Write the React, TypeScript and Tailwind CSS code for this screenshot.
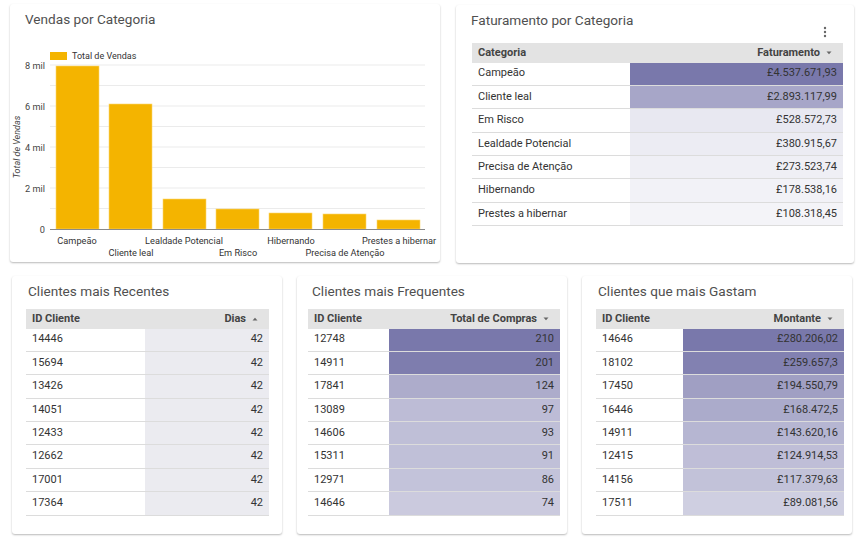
import React from 'react';

type Row = { k: string; v: string; bg: string };

// heat map colour, from the light end (t=0) to the dark purple (t=1)
function shade(t: number) {
  const r = Math.round(247 - 126 * t);
  const g = Math.round(247 - 127 * t);
  const b = Math.round(250 - 79 * t);
  return `rgb(${r}, ${g}, ${b})`;
}

function heat(data: [string, number, string][]): Row[] {
  const max = Math.max(...data.map((d) => d[1]));
  return data.map(([k, n, v]) => ({ k, v, bg: shade(n / max) }));
}

const faturamento = heat([
  ['Campeão', 4537671.93, '£4.537.671,93'],
  ['Cliente leal', 2893117.99, '£2.893.117,99'],
  ['Em Risco', 528572.73, '£528.572,73'],
  ['Lealdade Potencial', 380915.67, '£380.915,67'],
  ['Precisa de Atenção', 273523.74, '£273.523,74'],
  ['Hibernando', 178538.16, '£178.538,16'],
  ['Prestes a hibernar', 108318.45, '£108.318,45'],
]);

const recentes: Row[] = ['14446', '15694', '13426', '14051', '12433', '12662', '17001', '17364'].map(
  (k) => ({ k, v: '42', bg: '#ebebf0' }),
);

const frequentes = heat(
  [
    ['12748', 210],
    ['14911', 201],
    ['17841', 124],
    ['13089', 97],
    ['14606', 93],
    ['15311', 91],
    ['12971', 86],
    ['14646', 74],
  ].map(([k, n]) => [k as string, n as number, String(n)]),
);

const gastam = heat([
  ['14646', 280206.02, '£280.206,02'],
  ['18102', 259657.3, '£259.657,3'],
  ['17450', 194550.79, '£194.550,79'],
  ['16446', 168472.5, '£168.472,5'],
  ['14911', 143620.16, '£143.620,16'],
  ['12415', 124914.53, '£124.914,53'],
  ['14156', 117379.63, '£117.379,63'],
  ['17511', 89081.56, '£89.081,56'],
]);

const bars = [
  { label: 'Campeão', x: 56, top: 66, lx: 77, row: 0 },
  { label: 'Cliente leal', x: 109, top: 104, lx: 131, row: 1 },
  { label: 'Lealdade Potencial', x: 163, top: 199, lx: 184, row: 0 },
  { label: 'Em Risco', x: 216, top: 209, lx: 238, row: 1 },
  { label: 'Hibernando', x: 269, top: 213, lx: 291, row: 0 },
  { label: 'Precisa de Atenção', x: 323, top: 214, lx: 345, row: 1 },
  { label: 'Prestes a hibernar', x: 377, top: 220, lx: 399, row: 0 },
];

const card = 'relative h-[258px] rounded-[3px] bg-white shadow-[0_1px_2px_rgba(0,0,0,0.28)]';
const title = 'pl-[15px] pt-[5px] text-[13.6px] leading-[20px] text-[#505050]';

function SortArrow({ up }: { up?: boolean }) {
  return (
    <svg width="6" height="4" viewBox="0 0 6 4" className="ml-[6px]">
      <path d={up ? 'M0.5 3.5 L3 0.8 L5.5 3.5 Z' : 'M0.5 0.5 L3 3.2 L5.5 0.5 Z'} fill="#666" />
    </svg>
  );
}

function DataTable({
  widthClass,
  keyClass,
  keyLabel,
  valueLabel,
  up,
  rows,
}: {
  widthClass: string;
  keyClass: string;
  keyLabel: string;
  valueLabel: string;
  up?: boolean;
  rows: Row[];
}) {
  return (
    <div className={`${widthClass} text-[11px] text-[#333]`}>
      <div className="flex h-[19.5px] items-center bg-[#e3e3e3] font-bold text-[#444]">
        <div className={`${keyClass} pl-[6px]`}>{keyLabel}</div>
        <div className="flex flex-1 items-center justify-end pr-[11px]">
          {valueLabel}
          <SortArrow up={up} />
        </div>
      </div>
      {rows.map((r, i) => (
        <div key={i} className="flex h-[23.4px] items-stretch border-b border-[#dcdcdc]">
          <div className={`${keyClass} flex items-center pl-[6px]`}>{r.k}</div>
          <div className="flex flex-1 items-center justify-end pr-[6px]" style={{ background: r.bg }}>
            {r.v}
          </div>
        </div>
      ))}
    </div>
  );
}

function SalesChart() {
  const grid = [1, 2, 3, 4, 5, 6, 7, 8].map((k) => 229 - k * 20.5);
  const ticks = [
    { t: '8 mil', y: 65 },
    { t: '6 mil', y: 106 },
    { t: '4 mil', y: 147 },
    { t: '2 mil', y: 188 },
    { t: '0', y: 229 },
  ];
  return (
    <svg width="430" height="229" className="block">
      <g transform="translate(-10,-29)" fontFamily="Roboto, sans-serif">
        <rect x="50" y="52" width="17" height="8" fill="#f4b400" />
        <text x="72" y="59" fontSize="9" fill="#333">
          Total de Vendas
        </text>
        {grid.map((y) => (
          <line key={y} x1="50" x2="425" y1={y} y2={y} stroke="#ebebeb" strokeWidth="1" />
        ))}
        {ticks.map((t) => (
          <text key={t.t} x="45" y={t.y + 3.5} fontSize="9.2" fill="#444" textAnchor="end">
            {t.t}
          </text>
        ))}
        <text
          x="0"
          y="0"
          fontSize="9"
          fontStyle="italic"
          fill="#444"
          textAnchor="middle"
          transform="translate(20,147) rotate(-90)"
        >
          Total de Vendas
        </text>
        {bars.map((b) => (
          <rect key={b.label} x={b.x} y={b.top} width="43" height={229 - b.top} fill="#f4b400" stroke="#fbd870" strokeWidth="0.6" />
        ))}
        <line x1="50" x2="425" y1="229.5" y2="229.5" stroke="#8a8a8a" strokeWidth="1" />
        {bars.map((b) => (
          <text key={b.label} x={b.lx} y={b.row ? 255.5 : 243.5} fontSize="9.2" fill="#333" textAnchor="middle">
            {b.label}
          </text>
        ))}
      </g>
    </svg>
  );
}

export default function App() {
  return (
    <div className="h-[554px] w-[866px] overflow-hidden bg-white font-[Roboto,'Liberation_Sans',sans-serif]">
      <div className="flex gap-4 pl-[10px] pt-[4px]">
        <div className={`${card} w-[430px]`}>
          <div className={title}>Vendas por Categoria</div>
          <SalesChart />
        </div>
        <div className={`${card} mt-[1px] w-[398px]`}>
          <div className={title}>Faturamento por Categoria</div>
          <svg width="4" height="12" viewBox="0 0 4 12" className="absolute right-[27px] top-[21px]">
            <circle cx="2" cy="2" r="1.2" fill="#666" />
            <circle cx="2" cy="6" r="1.2" fill="#666" />
            <circle cx="2" cy="10" r="1.2" fill="#666" />
          </svg>
          <div className="ml-[16px] mt-[13px]">
            <DataTable
              widthClass="w-[371px]"
              keyClass="w-[158px]"
              keyLabel="Categoria"
              valueLabel="Faturamento"
              rows={faturamento}
            />
          </div>
        </div>
      </div>

      <div className="mt-[13px] flex gap-[15px] pl-[12px]">
        <div className={`${card} w-[270px]`}>
          <div className={`${title} pl-[16px]`}>Clientes mais Recentes</div>
          <div className="ml-[14px] mt-[8px]">
            <DataTable
              widthClass="w-[243px]"
              keyClass="w-[119px]"
              keyLabel="ID Cliente"
              valueLabel="Dias"
              up
              rows={recentes}
            />
          </div>
        </div>
        <div className={`${card} w-[270px]`}>
          <div className={`${title} pl-[15px]`}>Clientes mais Frequentes</div>
          <div className="ml-[11px] mt-[8px]">
            <DataTable
              widthClass="w-[252px]"
              keyClass="w-[81px]"
              keyLabel="ID Cliente"
              valueLabel="Total de Compras"
              rows={frequentes}
            />
          </div>
        </div>
        <div className={`${card} w-[270px]`}>
          <div className={`${title} pl-[16px]`}>Clientes que mais Gastam</div>
          <div className="ml-[14px] mt-[8px]">
            <DataTable
              widthClass="w-[248px]"
              keyClass="w-[87px]"
              keyLabel="ID Cliente"
              valueLabel="Montante"
              rows={gastam}
            />
          </div>
        </div>
      </div>
    </div>
  );
}
